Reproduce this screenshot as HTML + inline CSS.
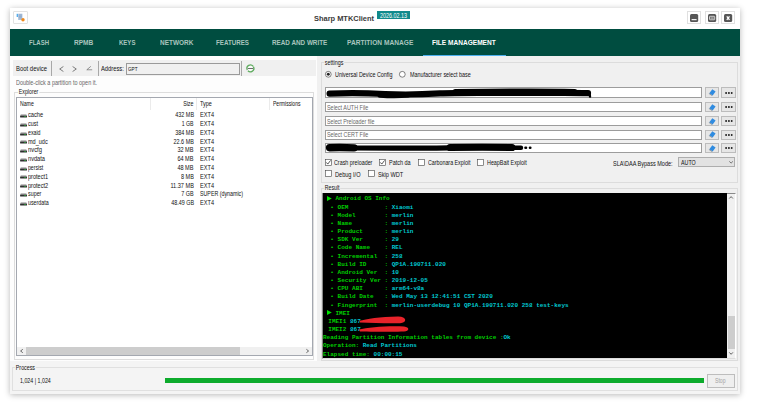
<!DOCTYPE html><html><head><meta charset="utf-8"><title>Sharp MTKClient</title><style>
html,body{margin:0;padding:0;background:#fff;}
body{width:768px;height:406px;position:relative;overflow:hidden;font-family:"Liberation Sans","DejaVu Sans",sans-serif;}
div,span{position:absolute;box-sizing:border-box;white-space:pre;}
span{transform-origin:left center;}
.t{font-size:6.4px;color:#111;}
.g{font-size:6.4px;color:#666;}
.tb{font-size:6.6px;color:#111;}
.nav{font-size:6.6px;color:#a9c4be;font-weight:bold;}
.mono{font-family:"Liberation Mono","DejaVu Sans Mono",monospace;font-size:6.02px;font-weight:bold;color:#00cc00;}
.mono b{color:#00c8d0;font-weight:bold;}
.inp{background:#fff;border:1px solid #9c9c9c;}
.btn{background:#e6e6e6;border:1px solid #bcbcbc;}
.cb{background:#fff;border:1px solid #3a3a3a;}
svg{position:absolute;overflow:visible;}
</style></head><body>
<div style="left:10px;top:8px;width:729.8px;height:385.8px;background:#fdfdfd;box-shadow:0 1px 6px rgba(0,0,0,0.28);"></div>
<div style="left:10px;top:8px;width:729.8px;height:21px;background:#fff;"></div>
<div style="left:13px;top:11px;width:14.5px;height:12.8px;background:#fff;border:1px solid #e2e2e2;border-radius:1px;"></div>
<svg style="left:15.5px;top:12.8px" width="10" height="9" viewBox="0 0 10 9"><rect x="2.2" y="0.7" width="4.2" height="6.3" fill="#a9c0dc"/><path d="M2.8 2h3M2.8 3.4h3M2.8 4.8h3" stroke="#7f99b8" stroke-width="0.5"/><rect x="0.7" y="0.8" width="1.1" height="3.2" fill="#2f9be8"/><circle cx="7" cy="6.8" r="1.7" fill="#f08a1c"/></svg>
<span class="t" style="left:314.30px;top:13.50px;line-height:9px;transform:scaleX(1.036);font-size:7.2px;font-weight:bold;color:#3a3a3a;">Sharp MTKClient</span>
<div style="left:377px;top:11px;width:33px;height:8.4px;background:#118a8c;"></div>
<span class="t" style="left:379.70px;top:11.80px;line-height:8px;transform:scaleX(0.844);font-size:6.4px;color:#fff;">2026.02.13</span>
<div style="left:687.3px;top:11.3px;width:13.5px;height:12.5px;background:#fff;border:1px solid #e0e0e0;"></div>
<div style="left:704.5px;top:11.3px;width:14.1px;height:12.5px;background:#fff;border:1px solid #e0e0e0;"></div>
<div style="left:721px;top:11.3px;width:13.9px;height:12.5px;background:#fff;border:1px solid #e0e0e0;"></div>
<svg style="left:690px;top:13.9px" width="8.2" height="8.1" viewBox="0 0 8.2 8.1"><rect x="0" y="0" width="8.2" height="8.1" rx="1.5" fill="#565656"/><rect x="1.6" y="5.1" width="5" height="1.1" fill="#fff"/></svg>
<svg style="left:707.6px;top:13.9px" width="8.2" height="8.1" viewBox="0 0 8.2 8.1"><rect x="0" y="0" width="8.2" height="8.1" rx="1.5" fill="#565656"/><rect x="1.5" y="2.3" width="5.2" height="3.5" rx="0.6" fill="none" stroke="#eee" stroke-width="0.8"/><rect x="2.4" y="3.6" width="3.4" height="0.9" fill="#ddd"/></svg>
<svg style="left:724.1px;top:13.9px" width="8.2" height="8.1" viewBox="0 0 8.2 8.1"><rect x="0" y="0" width="8.2" height="8.1" rx="1.5" fill="#565656"/><path d="M2.8 2.3 L5.5 5.8 M5.5 2.3 L2.8 5.8" stroke="#fff" stroke-width="1.3"/></svg>
<div style="left:10px;top:29px;width:729.8px;height:26.5px;background:#004d40;"></div>
<span class="nav" style="left:29.00px;top:38.10px;line-height:9px;transform:scaleX(0.910);">FLASH</span>
<span class="nav" style="left:74.00px;top:38.10px;line-height:9px;transform:scaleX(0.994);">RPMB</span>
<span class="nav" style="left:119.30px;top:38.10px;line-height:9px;transform:scaleX(0.913);">KEYS</span>
<span class="nav" style="left:160.00px;top:38.10px;line-height:9px;transform:scaleX(0.977);">NETWORK</span>
<span class="nav" style="left:216.00px;top:38.10px;line-height:9px;transform:scaleX(0.942);">FEATURES</span>
<span class="nav" style="left:271.70px;top:38.10px;line-height:9px;transform:scaleX(0.959);">READ AND WRITE</span>
<span class="nav" style="left:346.70px;top:38.10px;line-height:9px;transform:scaleX(1.002);">PARTITION MANAGE</span>
<span class="nav" style="left:431.70px;top:38.10px;line-height:9px;transform:scaleX(0.994);color:#fff;">FILE MANAGEMENT</span>
<div style="left:423px;top:54.6px;width:83px;height:1.3px;background:#4db0ee;"></div>
<div style="left:13px;top:59.8px;width:302.6px;height:16.6px;background:#f0f0f0;"></div>
<span class="tb" style="left:15.80px;top:65.10px;line-height:8px;transform:scaleX(0.899);">Boot device</span>
<div style="left:51px;top:61px;width:0.9px;height:15px;background:#a8a8a8;"></div>
<svg style="left:59px;top:65.6px" width="5" height="6" viewBox="0 0 5 6"><path d="M4.4 0.5 L0.7 3 L4.4 5.5" fill="none" stroke="#555" stroke-width="0.75"/></svg>
<svg style="left:72px;top:65.6px" width="5" height="6" viewBox="0 0 5 6"><path d="M0.6 0.5 L4.3 3 L0.6 5.5" fill="none" stroke="#555" stroke-width="0.75"/></svg>
<svg style="left:86.2px;top:66.2px" width="6.4" height="4.2" viewBox="0 0 6.4 4.2"><path d="M6.2 3.8 H0.8 L4.9 0.3" fill="none" stroke="#6a6a6a" stroke-width="0.7"/></svg>
<div style="left:97.8px;top:61px;width:0.9px;height:15px;background:#a8a8a8;"></div>
<span class="tb" style="left:101.30px;top:65.10px;line-height:8px;transform:scaleX(0.876);">Address:</span>
<div style="left:126.2px;top:63px;width:114px;height:11.6px;background:#f0f0f0;border:1px solid #9a9a9a;"></div>
<span class="t" style="left:128.10px;top:64.50px;line-height:8px;transform:scaleX(0.770);font-size:6px;">GPT</span>
<div style="left:241.3px;top:61px;width:0.9px;height:15px;background:#a8a8a8;"></div>
<svg style="left:245.7px;top:64px" width="8.8" height="8.8" viewBox="0 0 8.8 8.8"><circle cx="4.4" cy="4.4" r="3.4" fill="#fafafa" stroke="#60ac60" stroke-width="1.35" stroke-dasharray="9.6 1.1" transform="rotate(-30 4.4 4.4)"/><rect x="1.9" y="4.05" width="5.2" height="0.75" fill="#3c3c3c"/></svg>
<span class="g" style="left:15.80px;top:79.40px;line-height:8px;transform:scaleX(0.857);">Double-click a partition to open it.</span>
<div style="left:14.3px;top:92.2px;width:299.8px;height:268px;border:1px solid #dddddd;"></div>
<span class="t" style="left:18.38px;top:88.40px;line-height:8px;transform:scaleX(0.819);background:#fdfdfd;padding:0 1px;">Explorer</span>
<div style="left:16px;top:96.8px;width:297px;height:259.2px;background:#fff;border:1px solid #a4a8b0;"></div>
<span class="t" style="left:20.20px;top:100.40px;line-height:8px;transform:scaleX(0.809);">Name</span>
<span class="t" style="right:574.2px;top:100.40px;line-height:8px;transform-origin:right center;transform:scaleX(0.828);">Size</span>
<span class="t" style="left:200.20px;top:100.40px;line-height:8px;transform:scaleX(0.859);">Type</span>
<span class="t" style="left:272.50px;top:100.40px;line-height:8px;transform:scaleX(0.790);">Permissions</span>
<div style="left:150px;top:98px;width:1px;height:12.2px;background:#ebebeb;"></div>
<div style="left:196px;top:98px;width:1px;height:12.2px;background:#ebebeb;"></div>
<div style="left:269px;top:98px;width:1px;height:12.2px;background:#ebebeb;"></div>
<svg style="left:19.9px;top:114.00px" width="7.1" height="3.7" viewBox="0 0 7.1 3.7"><path d="M0.9 0.1 H6.2 L7 1.7 H0.1 Z" fill="#c2c2c2"/><rect x="0.1" y="1.5" width="6.9" height="2.1" rx="0.5" fill="#303030"/><rect x="4.3" y="2.1" width="1.6" height="0.9" fill="#2fa33f"/></svg>
<span class="t" style="left:28.10px;top:111.40px;line-height:8px;transform:scaleX(0.885);">cache</span>
<span class="t" style="right:574.2px;top:111.40px;line-height:8px;transform-origin:right center;transform:scaleX(0.853);">432 MB</span>
<span class="t" style="left:200.20px;top:111.40px;line-height:8px;transform:scaleX(0.876);">EXT4</span>
<svg style="left:19.9px;top:122.77px" width="7.1" height="3.7" viewBox="0 0 7.1 3.7"><path d="M0.9 0.1 H6.2 L7 1.7 H0.1 Z" fill="#c2c2c2"/><rect x="0.1" y="1.5" width="6.9" height="2.1" rx="0.5" fill="#303030"/><rect x="4.3" y="2.1" width="1.6" height="0.9" fill="#2fa33f"/></svg>
<span class="t" style="left:28.10px;top:120.17px;line-height:8px;transform:scaleX(0.852);">cust</span>
<span class="t" style="right:574.2px;top:120.17px;line-height:8px;transform-origin:right center;transform:scaleX(0.816);">1 GB</span>
<span class="t" style="left:200.20px;top:120.17px;line-height:8px;transform:scaleX(0.876);">EXT4</span>
<svg style="left:19.9px;top:131.54px" width="7.1" height="3.7" viewBox="0 0 7.1 3.7"><path d="M0.9 0.1 H6.2 L7 1.7 H0.1 Z" fill="#c2c2c2"/><rect x="0.1" y="1.5" width="6.9" height="2.1" rx="0.5" fill="#303030"/><rect x="4.3" y="2.1" width="1.6" height="0.9" fill="#2fa33f"/></svg>
<span class="t" style="left:28.10px;top:128.94px;line-height:8px;transform:scaleX(0.818);">exaid</span>
<span class="t" style="right:574.2px;top:128.94px;line-height:8px;transform-origin:right center;transform:scaleX(0.853);">384 MB</span>
<span class="t" style="left:200.20px;top:128.94px;line-height:8px;transform:scaleX(0.876);">EXT4</span>
<svg style="left:19.9px;top:140.31px" width="7.1" height="3.7" viewBox="0 0 7.1 3.7"><path d="M0.9 0.1 H6.2 L7 1.7 H0.1 Z" fill="#c2c2c2"/><rect x="0.1" y="1.5" width="6.9" height="2.1" rx="0.5" fill="#303030"/><rect x="4.3" y="2.1" width="1.6" height="0.9" fill="#2fa33f"/></svg>
<span class="t" style="left:28.10px;top:137.71px;line-height:8px;transform:scaleX(0.866);">md_udc</span>
<span class="t" style="right:574.2px;top:137.71px;line-height:8px;transform-origin:right center;transform:scaleX(0.852);">22.6 MB</span>
<span class="t" style="left:200.20px;top:137.71px;line-height:8px;transform:scaleX(0.876);">EXT4</span>
<svg style="left:19.9px;top:149.08px" width="7.1" height="3.7" viewBox="0 0 7.1 3.7"><path d="M0.9 0.1 H6.2 L7 1.7 H0.1 Z" fill="#c2c2c2"/><rect x="0.1" y="1.5" width="6.9" height="2.1" rx="0.5" fill="#303030"/><rect x="4.3" y="2.1" width="1.6" height="0.9" fill="#2fa33f"/></svg>
<span class="t" style="left:28.10px;top:146.48px;line-height:8px;transform:scaleX(0.910);">nvcfg</span>
<span class="t" style="right:574.2px;top:146.48px;line-height:8px;transform-origin:right center;transform:scaleX(0.871);">32 MB</span>
<span class="t" style="left:200.20px;top:146.48px;line-height:8px;transform:scaleX(0.876);">EXT4</span>
<svg style="left:19.9px;top:157.85px" width="7.1" height="3.7" viewBox="0 0 7.1 3.7"><path d="M0.9 0.1 H6.2 L7 1.7 H0.1 Z" fill="#c2c2c2"/><rect x="0.1" y="1.5" width="6.9" height="2.1" rx="0.5" fill="#303030"/><rect x="4.3" y="2.1" width="1.6" height="0.9" fill="#2fa33f"/></svg>
<span class="t" style="left:28.10px;top:155.25px;line-height:8px;transform:scaleX(0.885);">nvdata</span>
<span class="t" style="right:574.2px;top:155.25px;line-height:8px;transform-origin:right center;transform:scaleX(0.871);">64 MB</span>
<span class="t" style="left:200.20px;top:155.25px;line-height:8px;transform:scaleX(0.876);">EXT4</span>
<svg style="left:19.9px;top:166.62px" width="7.1" height="3.7" viewBox="0 0 7.1 3.7"><path d="M0.9 0.1 H6.2 L7 1.7 H0.1 Z" fill="#c2c2c2"/><rect x="0.1" y="1.5" width="6.9" height="2.1" rx="0.5" fill="#303030"/><rect x="4.3" y="2.1" width="1.6" height="0.9" fill="#2fa33f"/></svg>
<span class="t" style="left:28.10px;top:164.02px;line-height:8px;transform:scaleX(0.807);">persist</span>
<span class="t" style="right:574.2px;top:164.02px;line-height:8px;transform-origin:right center;transform:scaleX(0.871);">48 MB</span>
<span class="t" style="left:200.20px;top:164.02px;line-height:8px;transform:scaleX(0.876);">EXT4</span>
<svg style="left:19.9px;top:175.39px" width="7.1" height="3.7" viewBox="0 0 7.1 3.7"><path d="M0.9 0.1 H6.2 L7 1.7 H0.1 Z" fill="#c2c2c2"/><rect x="0.1" y="1.5" width="6.9" height="2.1" rx="0.5" fill="#303030"/><rect x="4.3" y="2.1" width="1.6" height="0.9" fill="#2fa33f"/></svg>
<span class="t" style="left:28.10px;top:172.79px;line-height:8px;transform:scaleX(0.870);">protect1</span>
<span class="t" style="right:574.2px;top:172.79px;line-height:8px;transform-origin:right center;transform:scaleX(0.865);">8 MB</span>
<span class="t" style="left:200.20px;top:172.79px;line-height:8px;transform:scaleX(0.876);">EXT4</span>
<svg style="left:19.9px;top:184.16px" width="7.1" height="3.7" viewBox="0 0 7.1 3.7"><path d="M0.9 0.1 H6.2 L7 1.7 H0.1 Z" fill="#c2c2c2"/><rect x="0.1" y="1.5" width="6.9" height="2.1" rx="0.5" fill="#303030"/><rect x="4.3" y="2.1" width="1.6" height="0.9" fill="#2fa33f"/></svg>
<span class="t" style="left:28.10px;top:181.56px;line-height:8px;transform:scaleX(0.870);">protect2</span>
<span class="t" style="right:574.2px;top:181.56px;line-height:8px;transform-origin:right center;transform:scaleX(0.874);">11.37 MB</span>
<span class="t" style="left:200.20px;top:181.56px;line-height:8px;transform:scaleX(0.876);">EXT4</span>
<svg style="left:19.9px;top:192.93px" width="7.1" height="3.7" viewBox="0 0 7.1 3.7"><path d="M0.9 0.1 H6.2 L7 1.7 H0.1 Z" fill="#c2c2c2"/><rect x="0.1" y="1.5" width="6.9" height="2.1" rx="0.5" fill="#303030"/><rect x="4.3" y="2.1" width="1.6" height="0.9" fill="#2fa33f"/></svg>
<span class="t" style="left:28.10px;top:190.33px;line-height:8px;transform:scaleX(0.838);">super</span>
<span class="t" style="right:574.2px;top:190.33px;line-height:8px;transform-origin:right center;transform:scaleX(0.851);">7 GB</span>
<span class="t" style="left:200.20px;top:190.33px;line-height:8px;transform:scaleX(0.829);">SUPER (dynamic)</span>
<svg style="left:19.9px;top:201.70px" width="7.1" height="3.7" viewBox="0 0 7.1 3.7"><path d="M0.9 0.1 H6.2 L7 1.7 H0.1 Z" fill="#c2c2c2"/><rect x="0.1" y="1.5" width="6.9" height="2.1" rx="0.5" fill="#303030"/><rect x="4.3" y="2.1" width="1.6" height="0.9" fill="#2fa33f"/></svg>
<span class="t" style="left:28.10px;top:199.10px;line-height:8px;transform:scaleX(0.828);">userdata</span>
<span class="t" style="right:574.2px;top:199.10px;line-height:8px;transform-origin:right center;transform:scaleX(0.844);">48.49 GB</span>
<span class="t" style="left:200.20px;top:199.10px;line-height:8px;transform:scaleX(0.876);">EXT4</span>
<div style="left:17px;top:346.8px;width:295px;height:8.2px;background:#f0f0f0;"></div>
<div style="left:26px;top:346.8px;width:213.5px;height:8.2px;background:#cdcdcd;"></div>
<svg style="left:19.8px;top:349px" width="3.2" height="4" viewBox="0 0 3.2 4"><path d="M2.8 0.3 L0.6 2 L2.8 3.7" fill="none" stroke="#444" stroke-width="0.8"/></svg>
<svg style="left:305.6px;top:349px" width="3.2" height="4" viewBox="0 0 3.2 4"><path d="M0.4 0.3 L2.6 2 L0.4 3.7" fill="none" stroke="#444" stroke-width="0.8"/></svg>
<div style="left:316.8px;top:55.5px;width:423px;height:306px;background:#f0f0f0;"></div>
<div style="left:320.5px;top:62.3px;width:417.3px;height:120.8px;border:1px solid #dcdcdc;"></div>
<span class="t" style="left:324.06px;top:58.90px;line-height:8px;transform:scaleX(0.840);background:#f0f0f0;padding:0 1px;">settings</span>
<svg style="left:324.5px;top:71.4px" width="6.6" height="6.6" viewBox="0 0 6.6 6.6"><circle cx="3.3" cy="3.3" r="2.9" fill="#fff" stroke="#333" stroke-width="0.6"/><circle cx="3.3" cy="3.3" r="1.5" fill="#222"/></svg>
<span class="t" style="left:335.10px;top:71.10px;line-height:8px;transform:scaleX(0.843);">Universal Device Config</span>
<svg style="left:399.3px;top:71.4px" width="6.6" height="6.6" viewBox="0 0 6.6 6.6"><circle cx="3.3" cy="3.3" r="2.9" fill="#fff" stroke="#333" stroke-width="0.6"/></svg>
<span class="t" style="left:409.70px;top:71.10px;line-height:8px;transform:scaleX(0.847);">Manufacturer select base</span>
<div class="inp" style="left:325px;top:87.4px;width:376.7px;height:10.3px;"></div>
<div class="btn" style="left:704.7px;top:87.4px;width:14.1px;height:10.3px;"></div>
<svg style="left:708.4px;top:89.10px" width="8" height="7" viewBox="0 0 8 7"><path d="M4.3 0.2 L7.6 2.5 L4.6 6.5 L1.3 4.2 Z" fill="#2f8be0"/><path d="M1.3 4.2 L4.6 6.5 L3.7 6.8 L0.7 4.8 Z" fill="#7d8894"/></svg>
<div class="btn" style="left:721.2px;top:87.4px;width:14.5px;height:10.3px;"></div>
<svg style="left:725.3px;top:91.70px" width="8" height="2" viewBox="0 0 8 2"><circle cx="1.1" cy="1" r="0.95" fill="#1c1c1c"/><circle cx="3.9" cy="1" r="0.95" fill="#1c1c1c"/><circle cx="6.7" cy="1" r="0.95" fill="#1c1c1c"/></svg>
<div class="inp" style="left:325px;top:102.1px;width:376.7px;height:10.3px;"></div>
<span class="g" style="left:326.80px;top:103.90px;line-height:8px;transform:scaleX(0.849);">Select AUTH File</span>
<div class="btn" style="left:704.7px;top:102.1px;width:14.1px;height:10.3px;"></div>
<svg style="left:708.4px;top:103.80px" width="8" height="7" viewBox="0 0 8 7"><path d="M4.3 0.2 L7.6 2.5 L4.6 6.5 L1.3 4.2 Z" fill="#2f8be0"/><path d="M1.3 4.2 L4.6 6.5 L3.7 6.8 L0.7 4.8 Z" fill="#7d8894"/></svg>
<div class="btn" style="left:721.2px;top:102.1px;width:14.5px;height:10.3px;"></div>
<svg style="left:725.3px;top:106.40px" width="8" height="2" viewBox="0 0 8 2"><circle cx="1.1" cy="1" r="0.95" fill="#1c1c1c"/><circle cx="3.9" cy="1" r="0.95" fill="#1c1c1c"/><circle cx="6.7" cy="1" r="0.95" fill="#1c1c1c"/></svg>
<div class="inp" style="left:325px;top:116.1px;width:376.7px;height:10.3px;"></div>
<span class="g" style="left:326.80px;top:117.90px;line-height:8px;transform:scaleX(0.830);">Select Preloader file</span>
<div class="btn" style="left:704.7px;top:116.1px;width:14.1px;height:10.3px;"></div>
<svg style="left:708.4px;top:117.80px" width="8" height="7" viewBox="0 0 8 7"><path d="M4.3 0.2 L7.6 2.5 L4.6 6.5 L1.3 4.2 Z" fill="#2f8be0"/><path d="M1.3 4.2 L4.6 6.5 L3.7 6.8 L0.7 4.8 Z" fill="#7d8894"/></svg>
<div class="btn" style="left:721.2px;top:116.1px;width:14.5px;height:10.3px;"></div>
<svg style="left:725.3px;top:120.40px" width="8" height="2" viewBox="0 0 8 2"><circle cx="1.1" cy="1" r="0.95" fill="#1c1c1c"/><circle cx="3.9" cy="1" r="0.95" fill="#1c1c1c"/><circle cx="6.7" cy="1" r="0.95" fill="#1c1c1c"/></svg>
<div class="inp" style="left:325px;top:129.5px;width:376.7px;height:10.3px;"></div>
<span class="g" style="left:326.80px;top:131.30px;line-height:8px;transform:scaleX(0.847);">Select CERT File</span>
<div class="btn" style="left:704.7px;top:129.5px;width:14.1px;height:10.3px;"></div>
<svg style="left:708.4px;top:131.20px" width="8" height="7" viewBox="0 0 8 7"><path d="M4.3 0.2 L7.6 2.5 L4.6 6.5 L1.3 4.2 Z" fill="#2f8be0"/><path d="M1.3 4.2 L4.6 6.5 L3.7 6.8 L0.7 4.8 Z" fill="#7d8894"/></svg>
<div class="btn" style="left:721.2px;top:129.5px;width:14.5px;height:10.3px;"></div>
<svg style="left:725.3px;top:133.80px" width="8" height="2" viewBox="0 0 8 2"><circle cx="1.1" cy="1" r="0.95" fill="#1c1c1c"/><circle cx="3.9" cy="1" r="0.95" fill="#1c1c1c"/><circle cx="6.7" cy="1" r="0.95" fill="#1c1c1c"/></svg>
<div class="inp" style="left:325px;top:143px;width:376.7px;height:10.3px;"></div>
<div class="btn" style="left:704.7px;top:143px;width:14.1px;height:10.3px;"></div>
<svg style="left:708.4px;top:144.70px" width="8" height="7" viewBox="0 0 8 7"><path d="M4.3 0.2 L7.6 2.5 L4.6 6.5 L1.3 4.2 Z" fill="#2f8be0"/><path d="M1.3 4.2 L4.6 6.5 L3.7 6.8 L0.7 4.8 Z" fill="#7d8894"/></svg>
<div class="btn" style="left:721.2px;top:143px;width:14.5px;height:10.3px;"></div>
<svg style="left:725.3px;top:147.30px" width="8" height="2" viewBox="0 0 8 2"><circle cx="1.1" cy="1" r="0.95" fill="#1c1c1c"/><circle cx="3.9" cy="1" r="0.95" fill="#1c1c1c"/><circle cx="6.7" cy="1" r="0.95" fill="#1c1c1c"/></svg>
<svg style="left:0;top:0" width="768" height="406" viewBox="0 0 768 406"><g fill="none" stroke="#000" stroke-linecap="round" stroke-linejoin="round"><path d="M329.6 93.6 C345 93 365 93 385 94 S420 94.6 440 93.4 S500 93 530 93 S570 92.6 588 93.2" stroke-width="6.2"/><path d="M380 95.2 C390 96 400 96 408 95" stroke-width="5"/><path d="M455 91.6 C500 91 540 90.8 575 91.4" stroke-width="5"/><path d="M589.6 94 L590 96.6" stroke-width="2.4"/><path d="M329.6 147.7 C340 147.4 348 147.6 354 147.9" stroke-width="7.4"/><path d="M352 148 C380 148.2 420 148.2 450 147.8" stroke-width="5.2"/><path d="M450 147.6 C470 147.3 495 147.3 512 147.6" stroke-width="7"/><path d="M512 147.8 L521 147.8" stroke-width="4.4"/><path d="M525.5 147.8 L526 147.8 M530 147.8 L530.3 147.8" stroke-width="2.6"/></g></svg>
<svg style="left:325px;top:158.85px" width="6.7" height="6.7" viewBox="0 0 6.7 6.7"><rect x="0.35" y="0.35" width="6" height="6" fill="#fff" stroke="#444" stroke-width="0.6"/><path d="M1.3 3.4 L2.8 5.1 L5.6 1.4" fill="none" stroke="#222" stroke-width="0.75"/></svg>
<span class="t" style="left:334.30px;top:158.90px;line-height:8px;transform:scaleX(0.838);">Crash preloader</span>
<svg style="left:379.2px;top:158.85px" width="6.7" height="6.7" viewBox="0 0 6.7 6.7"><rect x="0.35" y="0.35" width="6" height="6" fill="#fff" stroke="#444" stroke-width="0.6"/><path d="M1.3 3.4 L2.8 5.1 L5.6 1.4" fill="none" stroke="#222" stroke-width="0.75"/></svg>
<span class="t" style="left:389.20px;top:158.90px;line-height:8px;transform:scaleX(0.856);">Patch da</span>
<svg style="left:418.2px;top:158.85px" width="6.7" height="6.7" viewBox="0 0 6.7 6.7"><rect x="0.35" y="0.35" width="6" height="6" fill="#fff" stroke="#444" stroke-width="0.6"/></svg>
<span class="t" style="left:427.50px;top:158.90px;line-height:8px;transform:scaleX(0.831);">Carbonara Exploit</span>
<svg style="left:477.2px;top:158.85px" width="6.7" height="6.7" viewBox="0 0 6.7 6.7"><rect x="0.35" y="0.35" width="6" height="6" fill="#fff" stroke="#444" stroke-width="0.6"/></svg>
<span class="t" style="left:487.00px;top:158.90px;line-height:8px;transform:scaleX(0.840);">HeapBait Exploit</span>
<svg style="left:325px;top:170.35px" width="6.7" height="6.7" viewBox="0 0 6.7 6.7"><rect x="0.35" y="0.35" width="6" height="6" fill="#fff" stroke="#444" stroke-width="0.6"/></svg>
<span class="t" style="left:335.00px;top:170.50px;line-height:8px;transform:scaleX(0.875);">Debug I/O</span>
<svg style="left:367.5px;top:170.35px" width="6.7" height="6.7" viewBox="0 0 6.7 6.7"><rect x="0.35" y="0.35" width="6" height="6" fill="#fff" stroke="#444" stroke-width="0.6"/></svg>
<span class="t" style="left:377.50px;top:170.50px;line-height:8px;transform:scaleX(0.876);">Skip WDT</span>
<span class="t" style="left:613.20px;top:159.90px;line-height:8px;transform:scaleX(0.865);">SLA\DAA Bypass Mode:</span>
<div style="left:678.2px;top:156.8px;width:57.2px;height:10.6px;background:#e2e2e2;border:1px solid #adadad;"></div>
<span class="t" style="left:680.60px;top:158.70px;line-height:8px;transform:scaleX(0.833);">AUTO</span>
<svg style="left:728.7px;top:161.1px" width="4.2" height="2.6" viewBox="0 0 4.2 2.6"><path d="M0.3 0.4 L2.1 2.1 L3.9 0.4" fill="none" stroke="#444" stroke-width="0.7"/></svg>
<div style="left:320.5px;top:187.5px;width:417.3px;height:173px;border:1px solid #dcdcdc;"></div>
<span class="t" style="left:324.19px;top:183.90px;line-height:8px;transform:scaleX(0.811);background:#f0f0f0;padding:0 1px;">Result</span>
<div style="left:322.2px;top:192.5px;width:413.8px;height:166px;background:#f0f0f0;border:1px solid #8a8a8a;border-right-color:#fff;border-bottom-color:#ddd;"></div>
<div style="left:323px;top:193.3px;width:403.7px;height:164.4px;background:#000;"></div>
<div style="left:728px;top:316.1px;width:7.2px;height:32.6px;background:#cdcdcd;"></div>
<svg style="left:729px;top:196.2px" width="4.2" height="2.9" viewBox="0 0 4.2 2.9"><path d="M0.3 2.5 L2.1 0.6 L3.9 2.5" fill="none" stroke="#505050" stroke-width="0.9"/></svg>
<svg style="left:729.2px;top:352.4px" width="4.2" height="2.9" viewBox="0 0 4.2 2.9"><path d="M0.3 0.4 L2.1 2.3 L3.9 0.4" fill="none" stroke="#505050" stroke-width="0.9"/></svg>
<svg style="left:327.3px;top:196.00px" width="4.8" height="5" viewBox="0 0 4.8 5"><path d="M0 0 L4.8 2.5 L0 5 Z" fill="#00e000"/></svg>
<span class="mono" style="left:335.50px;top:195.40px;line-height:8px;">Android OS Info</span>
<span class="mono" style="left:326.76px;top:203.56px;line-height:8px;"> • OEM          : <b>Xiaomi</b></span>
<span class="mono" style="left:326.76px;top:211.73px;line-height:8px;"> • Model        : <b>merlin</b></span>
<span class="mono" style="left:326.76px;top:219.90px;line-height:8px;"> • Name         : <b>merlin</b></span>
<span class="mono" style="left:326.76px;top:228.06px;line-height:8px;"> • Product      : <b>merlin</b></span>
<span class="mono" style="left:326.76px;top:236.22px;line-height:8px;"> • SDK Ver      : <b>29</b></span>
<span class="mono" style="left:326.76px;top:244.39px;line-height:8px;"> • Code Name    : <b>REL</b></span>
<span class="mono" style="left:326.76px;top:252.56px;line-height:8px;"> • Incremental  : <b>258</b></span>
<span class="mono" style="left:326.76px;top:260.72px;line-height:8px;"> • Build ID     : <b>QP1A.190711.020</b></span>
<span class="mono" style="left:326.76px;top:268.88px;line-height:8px;"> • Android Ver  : <b>10</b></span>
<span class="mono" style="left:326.76px;top:277.05px;line-height:8px;"> • Security Ver : <b>2019-12-05</b></span>
<span class="mono" style="left:326.76px;top:285.21px;line-height:8px;"> • CPU ABI      : <b>arm64-v8a</b></span>
<span class="mono" style="left:326.76px;top:293.38px;line-height:8px;"> • Build Date   : <b>Wed May 13 12:41:51 CST 2020</b></span>
<span class="mono" style="left:326.76px;top:301.54px;line-height:8px;"> • Fingerprint  : <b>merlin-userdebug 10 QP1A.190711.020 258 test-keys</b></span>
<svg style="left:327.3px;top:310.31px" width="4.8" height="5" viewBox="0 0 4.8 5"><path d="M0 0 L4.8 2.5 L0 5 Z" fill="#00e000"/></svg>
<span class="mono" style="left:335.50px;top:309.71px;line-height:8px;">IMEI</span>
<span class="mono" style="left:324.67px;top:317.88px;line-height:8px;"> IMEI1 <b>867</b></span>
<span class="mono" style="left:324.67px;top:326.04px;line-height:8px;"> IMEI2 <b>867</b></span>
<span class="mono" style="left:323.00px;top:334.20px;line-height:8px;">Reading Partition Information tables from device :<b>Ok</b></span>
<span class="mono" style="left:323.00px;top:342.37px;line-height:8px;">Operation: <b>Read Partitions</b></span>
<span class="mono" style="left:323.00px;top:350.53px;line-height:8px;">Elapsed time: <b>00:00:15</b></span>
<svg style="left:358px;top:315px" width="52" height="18" viewBox="0 0 52 18"><path d="M1.5 5.8 C8 4 22 1.6 40 1.4 C49 1.3 49.5 7.6 42 8.2 C30 8.8 14 7.6 2 7.4 Z" fill="#e8232a"/><path d="M0.8 14.6 C10 12.6 30 10.6 46 11.6 C52 12.2 51.5 16.4 46 16.6 C34 17 14 16.6 2 16.4 Z" fill="#e8232a"/></svg>
<div style="left:10px;top:361.2px;width:729.8px;height:32.6px;background:#f4f4f4;"></div>
<div style="left:11.5px;top:367.2px;width:726.4px;height:24px;border:1px solid #e0e0e0;"></div>
<span class="t" style="left:15.17px;top:363.60px;line-height:8px;transform:scaleX(0.831);background:#f4f4f4;padding:0 1px;">Process</span>
<span class="t" style="left:20.20px;top:376.70px;line-height:8px;transform:scaleX(0.828);">1,024 | 1,024</span>
<div style="left:164.8px;top:378.3px;width:539px;height:4.7px;background:#0dab2c;"></div>
<div style="left:707px;top:374.2px;width:27.7px;height:13.6px;background:#efefef;border:1px solid #bdbdbd;"></div>
<span class="t" style="left:714.70px;top:377.40px;line-height:8px;transform:scaleX(0.806);color:#a3a3a3;">Stop</span>
</body></html>
